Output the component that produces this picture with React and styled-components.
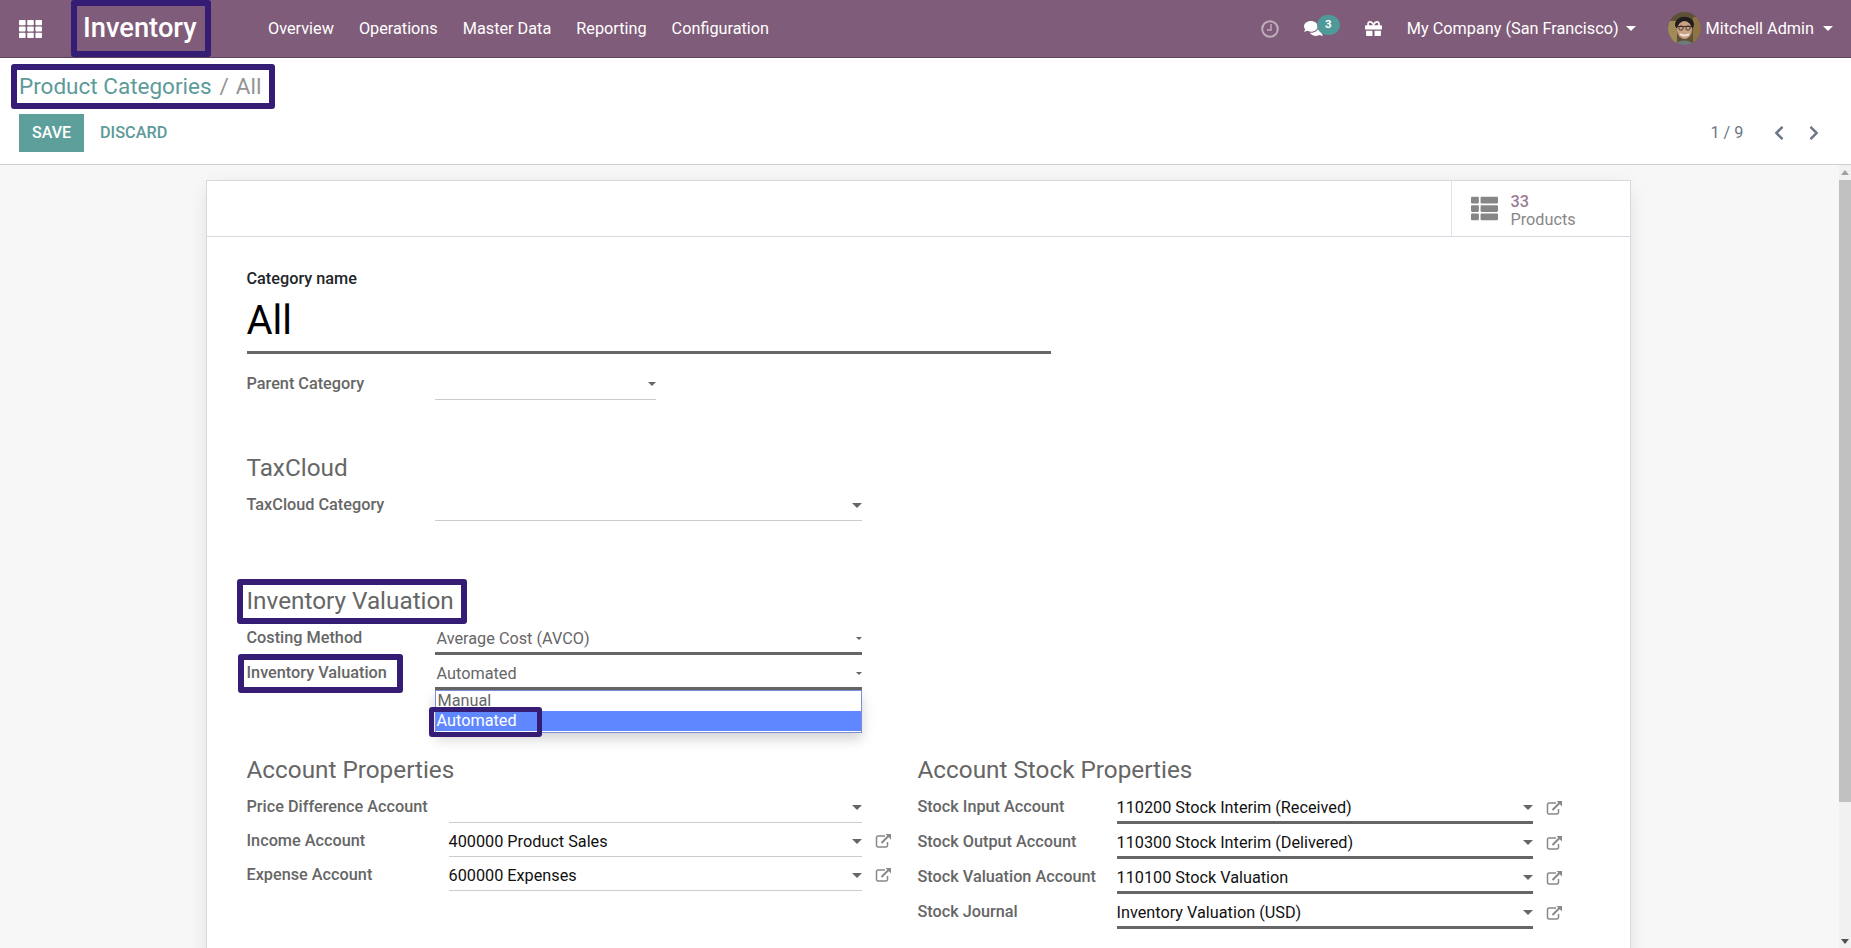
import React from "react";
import styled, { createGlobalStyle } from "styled-components";
import { FaThList, FaGift, FaChevronLeft, FaChevronRight, FaComments } from "react-icons/fa";

const GlobalStyle = createGlobalStyle`
  html, body {
    margin: 0;
    padding: 0;
    height: 100%;
    overflow: hidden;
    font-family: Roboto, "Liberation Sans", sans-serif;
    font-size: 16.25px;
    color: #666;
    background: #fff;
  }
`;

const Page = styled.div`
  display: flex;
  flex-direction: column;
  height: 948px;
  overflow: hidden;
`;

const Navbar = styled.header`
  display: flex;
  align-items: center;
  height: 57px;
  flex-shrink: 0;
  background: #7f5c79;
  border-bottom: 1px solid #5d4359;
  color: #fff;
`;

const AppsIcon = styled.svg`
  width: 23px;
  height: 18px;
  margin-left: 19px;
  fill: #fff;
`;

const Marked = styled.span`
  position: relative;
  display: inline-block;
`;

const HighlightBox = styled.span`
  position: absolute;
  top: ${({ $top }) => $top}px;
  left: ${({ $left }) => $left}px;
  width: ${({ $width }) => $width}px;
  height: ${({ $height }) => $height}px;
  box-sizing: border-box;
  border: ${({ $stroke }) => $stroke || 6}px solid #351c75;
  border-radius: 3px;
  pointer-events: none;
`;

const Brand = styled.div`
  position: relative;
  margin-left: 41px;
  width: 113px;
  font-size: 27.3px;
  font-weight: 500;
  line-height: 57px;
  white-space: nowrap;
`;

const Menu = styled.nav`
  display: flex;
  margin-left: 72px;
  gap: 25px;
  font-size: 16.25px;
`;

const NavRight = styled.div`
  display: flex;
  align-items: center;
  margin-left: auto;
  padding-right: 18px;
  font-size: 16.25px;
`;

const ClockIcon = styled.svg`
  width: 18px;
  height: 18px;
  fill: none;
  stroke: #fff;
  stroke-width: 2;
  opacity: 0.5;
`;

const ChatWrap = styled.div`
  position: relative;
  display: flex;
  margin-left: 25px;
  margin-right: 17px;
`;

const ChatBadge = styled.span`
  position: absolute;
  top: -4px;
  left: 13px;
  width: 23px;
  height: 20px;
  border-radius: 10px;
  background: #4f9a98;
  color: #fff;
  font-size: 11.5px;
  font-weight: 700;
  line-height: 19px;
  text-align: center;
`;

const GiftIcon = styled(FaGift)`
  width: 17px;
  height: 17px;
  margin-left: 25px;
`;

const Caret = styled.span`
  display: inline-block;
  flex-shrink: 0;
  width: 0;
  height: 0;
  margin-left: ${({ $gap }) => $gap ?? 9}px;
  border-left: ${({ $size }) => $size ?? 5}px solid transparent;
  border-right: ${({ $size }) => $size ?? 5}px solid transparent;
  border-top: ${({ $size }) => $size ?? 5}px solid ${({ $color }) => $color || "#fff"};
`;

const Company = styled.div`
  display: flex;
  align-items: center;
  margin-left: 25px;
  margin-right: 32px;
  white-space: nowrap;
`;

const Avatar = styled.svg`
  width: 33px;
  height: 33px;
  margin-right: 5px;
  border-radius: 50%;
`;

const ControlPanel = styled.div`
  flex-shrink: 0;
  height: 106px;
  padding: 0 19px;
  background: #fff;
  border-bottom: 1px solid #cfcfcf;
`;

const Breadcrumb = styled.div`
  display: flex;
  align-items: center;
  height: 56px;
  font-size: 22.5px;
  color: #949494;
`;

const CrumbLink = styled.span`
  color: #5d9a98;
`;

const CrumbSep = styled.span`
  margin: 0 7px 0 8px;
`;

const Toolbar = styled.div`
  display: flex;
  align-items: center;
`;

const SaveButton = styled.button`
  height: 38px;
  width: 65px;
  padding: 0 0 2px;
  border: 0;
  background: #5d9f9b;
  color: #fff;
  font: 500 16px Roboto, sans-serif;
`;

const DiscardButton = styled.button`
  margin-left: 16px;
  padding: 0 0 2px;
  border: 0;
  background: none;
  color: #5d9a98;
  font: 500 16.25px Roboto, sans-serif;
`;

const Pager = styled.div`
  display: flex;
  align-items: center;
  margin-left: auto;
  margin-right: 10px;
  padding-bottom: 1px;
  color: #6b7785;
  font-size: 16.25px;
`;

const PagerArrow = styled.span`
  display: flex;
  margin-left: ${({ $gap }) => $gap}px;
  font-size: 16px;
`;

const Content = styled.div`
  display: flex;
  flex: 1;
  min-height: 0;
  background: #f7f7f7;
`;

const ScrollArea = styled.main`
  flex: 1;
  display: flex;
  justify-content: center;
  align-items: flex-start;
  padding-top: 15px;
  padding-right: 3px;
`;

const Sheet = styled.section`
  flex: 0 0 1425px;
  box-sizing: border-box;
  min-height: 900px;
  background: #fff;
  border: 1px solid #d8d8e0;
  box-shadow: 0 5px 20px -5px rgba(0, 0, 0, 0.15);
`;

const ButtonBox = styled.div`
  display: flex;
  justify-content: flex-end;
  height: 55px;
  border-bottom: 1px solid #d8d8e0;
`;

const StatButton = styled.div`
  display: flex;
  align-items: center;
  width: 179px;
  box-sizing: border-box;
  padding-left: 19px;
  border-left: 1px solid #e2e2e8;
`;

const StatIcon = styled(FaThList)`
  width: 27px;
  height: 27px;
  color: #868686;
`;

const StatText = styled.div`
  margin-top: 5px;
  margin-left: 13px;
  font-size: 16.25px;
  line-height: 18.5px;
  color: #888;
`;

const StatValue = styled.div`
  color: #9c7a97;
  font-weight: 500;
`;

const SheetBody = styled.div`
  padding: 31px 40px 0;
`;

const NameLabel = styled.div`
  font-size: 16.25px;
  font-weight: 500;
  line-height: 22px;
  color: #212529;
`;

const NameField = styled.div`
  width: 804px;
  height: 61px;
  font-size: 40px;
  line-height: 62px;
  color: #000;
  border-bottom: 3px solid #666;
`;

const SectionHeading = styled.h2`
  margin: ${({ $top }) => $top}px 0 0;
  font-size: 24.3px;
  font-weight: 400;
  line-height: 30px;
  color: #666;
`;

const FieldRow = styled.div`
  display: flex;
  position: relative;
  margin-top: ${({ $top }) => $top ?? 0}px;
  height: ${({ $height }) => $height ?? 28}px;
`;

const FieldLabel = styled.div`
  flex: 0 0 ${({ $width }) => $width}px;
  font-weight: 500;
  line-height: ${({ $leading }) => $leading ?? 23}px;
  color: #666;
  white-space: nowrap;
`;

const SelectBox = styled.div`
  position: relative;
  display: flex;
  align-items: center;
  justify-content: space-between;
  box-sizing: border-box;
  width: ${({ $width }) => $width}px;
  height: 100%;
  padding-bottom: ${({ $bottom }) => $bottom ?? 3}px;
  padding-left: ${({ $pad }) => $pad ?? 0}px;
  border-bottom: ${({ $active }) => ($active ? "3px solid #666" : "1px solid #ccc")};
  color: ${({ $muted }) => ($muted ? "#666" : "#111")};
  white-space: nowrap;
`;

const Options = styled.div`
  position: absolute;
  top: 100%;
  margin-top: 3px;
  left: 0;
  right: 0;
  box-sizing: border-box;
  height: 43px;
  background: #fff;
  border: 1px solid #7c8fd6;
  box-shadow: 0 6px 12px rgba(0, 0, 0, 0.18);
  color: #666;
  line-height: 20px;
`;

const Option = styled.div`
  position: relative;
  height: 20px;
  padding-left: ${({ $selected }) => ($selected ? 1 : 2)}px;
  background: ${({ $selected }) => ($selected ? "#5f87ff" : "transparent")};
  color: ${({ $selected }) => ($selected ? "#fff" : "#666")};
`;

const ExternalLink = styled.svg`
  flex-shrink: 0;
  width: 17px;
  height: 15px;
  margin-left: 13px;
  margin-top: 4px;
  fill: none;
  stroke: #888;
  stroke-width: 1.5;
`;

const Columns = styled.div`
  display: grid;
  grid-template-columns: 671px 1fr;
`;

const RowStack = styled.div`
  display: flex;
  flex-direction: column;
  gap: ${({ $gap }) => $gap}px;
  margin-top: ${({ $top }) => $top}px;
`;

const ScrollBar = styled.div`
  position: relative;
  flex: 0 0 12px;
  background: #f1f1f1;
`;

const ScrollThumb = styled.div`
  position: absolute;
  top: 15px;
  left: 0;
  right: 0;
  height: 622px;
  background: #c1c1c1;
`;

const ScrollArrow = styled.span`
  position: absolute;
  left: 2px;
  width: 0;
  height: 0;
  border-left: 4px solid transparent;
  border-right: 4px solid transparent;
  ${({ $down }) =>
    $down
      ? "bottom: 4px; border-top: 5px solid #505050;"
      : "top: 5px; border-bottom: 5px solid #a0a0a0;"}
`;

const externalIcon = (
  <ExternalLink viewBox="0 0 17 15">
    <path d="M10 3H3a1.5 1.5 0 0 0-1.5 1.5v8A1.5 1.5 0 0 0 3 14h8a1.5 1.5 0 0 0 1.5-1.5V9" />
    <path d="M6.5 10 14.5 2" strokeWidth="2" />
    <path d="M10.5 1h5.5v5.5z" fill="#888" stroke="none" />
  </ExternalLink>
);

const accountRows = [
  { label: "Price Difference Account", value: "", link: false },
  { label: "Income Account", value: "400000 Product Sales", link: true },
  { label: "Expense Account", value: "600000 Expenses", link: true },
];

const stockRows = [
  { label: "Stock Input Account", value: "110200 Stock Interim (Received)" },
  { label: "Stock Output Account", value: "110300 Stock Interim (Delivered)" },
  { label: "Stock Valuation Account", value: "110100 Stock Valuation" },
  { label: "Stock Journal", value: "Inventory Valuation (USD)" },
];

function App() {
  return (
    <Page>
      <GlobalStyle />
      <Navbar>
        <AppsIcon viewBox="0 0 23 18">
          {[0, 1, 2].flatMap((row) =>
            [0, 1, 2].map((col) => (
              <rect key={`${row}${col}`} x={col * 8.2} y={row * 6.4} width="6.6" height="5.2" rx="0.8" />
            ))
          )}
        </AppsIcon>
        <Brand>
          Inventory
          <HighlightBox $top={0} $left={-12} $width={140} $height={57} />
        </Brand>
        <Menu>
          <span>Overview</span>
          <span>Operations</span>
          <span>Master Data</span>
          <span>Reporting</span>
          <span>Configuration</span>
        </Menu>
        <NavRight>
          <ClockIcon viewBox="0 0 18 18">
            <circle cx="9" cy="9" r="7.8" />
            <path d="M10 4v6H6" strokeWidth="1.4" />
          </ClockIcon>
          <ChatWrap>
            <FaComments size={19} />
            <ChatBadge>3</ChatBadge>
          </ChatWrap>
          <GiftIcon />
          <Company>
            My Company (San Francisco)
            <Caret $gap={7} />
          </Company>
          <Avatar viewBox="0 0 33 33">
            <rect width="33" height="33" fill="#5f5138" />
            <rect x="0" y="9" width="9" height="24" fill="#a08a58" />
            <rect x="25" y="5" width="8" height="28" fill="#8d7447" />
            <path d="M7 13C7 2 26 2 26 13L25 16H8z" fill="#1f1c1a" />
            <ellipse cx="16.500" cy="18" rx="7.500" ry="9" fill="#c9a184" />
            <path d="M9 14.500h15" stroke="#3a3028" strokeWidth="1" />
            <circle cx="13" cy="16" r="2.200" fill="none" stroke="#3a3028" strokeWidth="0.9" />
            <circle cx="20" cy="16" r="2.200" fill="none" stroke="#3a3028" strokeWidth="0.9" />
            <path d="M12 22q4.500 3 9 0" stroke="#f2e8dc" strokeWidth="1.800" fill="none" />
            <path d="M5 33q11-9 23 0z" fill="#6f7a7a" />
          </Avatar>
          Mitchell Admin
          <Caret />
        </NavRight>
      </Navbar>

      <ControlPanel>
        <Breadcrumb>
          <Marked>
            <CrumbLink>Product Categories</CrumbLink>
            <CrumbSep>/</CrumbSep>
            All
            <HighlightBox $top={-9} $left={-8} $width={264} $height={45} />
          </Marked>
        </Breadcrumb>
        <Toolbar>
          <SaveButton>SAVE</SaveButton>
          <DiscardButton>DISCARD</DiscardButton>
          <Pager>
            1 / 9
            <PagerArrow $gap={27.5}>
              <FaChevronLeft />
            </PagerArrow>
            <PagerArrow $gap={19}>
              <FaChevronRight />
            </PagerArrow>
          </Pager>
        </Toolbar>
      </ControlPanel>

      <Content>
        <ScrollArea>
          <Sheet>
            <ButtonBox>
              <StatButton>
                <StatIcon />
                <StatText>
                  <StatValue>33</StatValue>
                  Products
                </StatText>
              </StatButton>
            </ButtonBox>
            <SheetBody>
              <NameLabel>Category name</NameLabel>
              <NameField>All</NameField>

              <FieldRow $top={18}>
                <FieldLabel $width={188}>Parent Category</FieldLabel>
                <SelectBox $width={221}>
                  <span />
                  <Caret $color="#666" $size={4.5} $gap={0} />
                </SelectBox>
              </FieldRow>

              <SectionHeading $top={53}>TaxCloud</SectionHeading>
              <FieldRow $top={10}>
                <FieldLabel $width={188}>TaxCloud Category</FieldLabel>
                <SelectBox $width={427}>
                  <span />
                  <Caret $color="#666" $size={5} $gap={0} />
                </SelectBox>
              </FieldRow>

              <SectionHeading $top={65}>
                <Marked>
                  Inventory Valuation
                  <HighlightBox $top={-7} $left={-10} $width={230} $height={45} />
                </Marked>
              </SectionHeading>
              <FieldRow $top={11}>
                <FieldLabel $width={188} $leading={22}>Costing Method</FieldLabel>
                <SelectBox $width={427} $active $muted $pad={2}>
                  Average Cost (AVCO)
                  <Caret $color="#666" $size={3.5} $gap={0} />
                </SelectBox>
              </FieldRow>
              <FieldRow $top={6} $height={29}>
                <FieldLabel $width={188}>
                  <Marked>
                    Inventory Valuation
                    <HighlightBox $top={-7} $left={-9} $width={165} $height={39} />
                  </Marked>
                </FieldLabel>
                <SelectBox $width={427} $active $muted $pad={2} $bottom={1}>
                  Automated
                  <Caret $color="#666" $size={3.5} $gap={0} />
                  <Options>
                    <Option>Manual</Option>
                    <Option $selected>
                      Automated
                      <HighlightBox $top={-4} $left={-7} $width={113} $height={30} $stroke={5} />
                    </Option>
                  </Options>
                </SelectBox>
              </FieldRow>

              <Columns>
                <div>
                  <SectionHeading $top={65}>Account Properties</SectionHeading>
                  <RowStack $top={10} $gap={6}>
                    {accountRows.map((row) => (
                      <FieldRow key={row.label}>
                        <FieldLabel $width={202}>{row.label}</FieldLabel>
                        <SelectBox $width={413}>
                          <span>{row.value}</span>
                          <Caret $color="#666" $size={5} $gap={0} />
                        </SelectBox>
                        {row.link && externalIcon}
                      </FieldRow>
                    ))}
                  </RowStack>
                </div>
                <div>
                  <SectionHeading $top={65}>Account Stock Properties</SectionHeading>
                  <RowStack $top={11} $gap={7}>
                    {stockRows.map((row) => (
                      <FieldRow key={row.label}>
                        <FieldLabel $width={199} $leading={22}>{row.label}</FieldLabel>
                        <SelectBox $width={416} $active>
                          <span>{row.value}</span>
                          <Caret $color="#666" $size={5} $gap={0} />
                        </SelectBox>
                        {externalIcon}
                      </FieldRow>
                    ))}
                  </RowStack>
                </div>
              </Columns>
            </SheetBody>
          </Sheet>
        </ScrollArea>
        <ScrollBar>
          <ScrollArrow />
          <ScrollThumb />
          <ScrollArrow $down />
        </ScrollBar>
      </Content>
    </Page>
  );
}

export default App;
